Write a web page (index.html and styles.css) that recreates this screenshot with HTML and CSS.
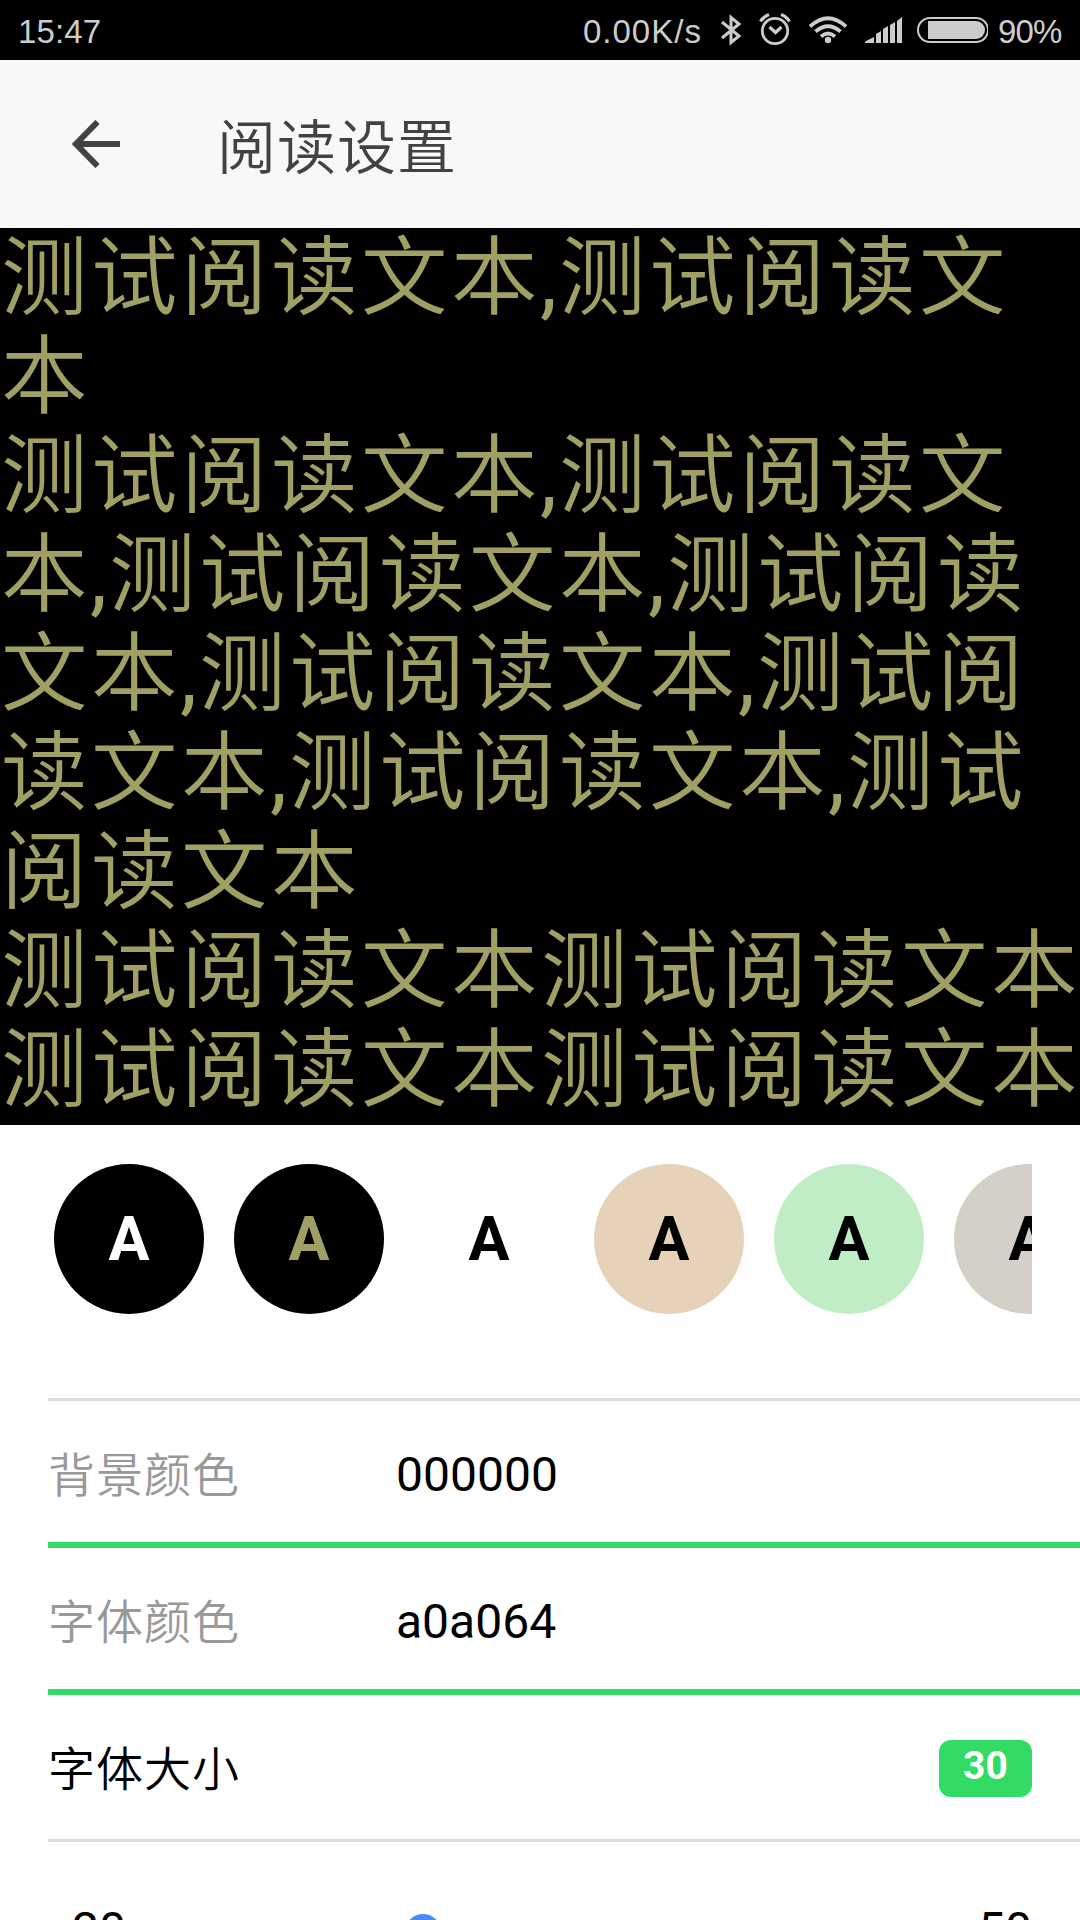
FILE: index.html
```
<!DOCTYPE html>
<html lang="zh-CN">
<head>
<meta charset="utf-8">
<title>阅读设置</title>
<link rel="stylesheet" href="styles.css">
</head>
<body>
<div class="status-bar">
  <span class="clock">15:47</span>
  <span class="speed">0.00K/s</span>
  <svg class="status-icons" width="272" height="60" viewBox="716 0 272 60" fill="none" stroke="#ccc">
    <path stroke-width="3" d="M722 22 739 36 731 42.500V17.500L739 24 722 38"/>
    <circle cx="775" cy="31" r="12.700" stroke-width="2.800"/>
    <path stroke-width="3.200" d="M769.500 27l6 5.500 6-5.500M760.500 21.500q3-5 8.500-7M789.500 21.500q-3-5-8.500-7"/>
    <path stroke-width="3.800" d="M810 26.500q18-16.500 36 0M815.500 31.500q12.500-10.500 25 0M821 36.500q7-6 14 0"/>
    <circle cx="828" cy="40" r="3.200" fill="#ccc" stroke="none"/>
    <path fill="#ccc" stroke="none" d="M865 43v-1.500l9-4.500V43zM876 43V34l5-3v12zM883 43V29l5-3v17zM890 43V25l5-3v21zM897 43V21l5-4v26z"/>
    <rect x="918" y="18" width="70" height="24" rx="12" stroke-width="2"/>
    <path fill="#ccc" stroke="none" d="M928 21h48a9 9 0 0 1 0 18h-48z"/>
  </svg>
  <span class="battery">90%</span>
</div>
<header class="toolbar">
  <svg class="back" width="48" height="48" viewBox="0 0 48 48" fill="none" stroke="#424242" stroke-width="6"><path d="M25.500 2 4 24l21.500 22M4 24h44"/></svg>
  <h1 class="title">阅读设置</h1>
</header>
<section class="preview">
  <p>测试阅读文本<span class="comma">,</span>测试阅读文<br>本</p>
  <p>测试阅读文本<span class="comma">,</span>测试阅读文<br>本<span class="comma">,</span>测试阅读文本<span class="comma">,</span>测试阅读<br>文本<span class="comma">,</span>测试阅读文本<span class="comma">,</span>测试阅<br>读文本<span class="comma">,</span>测试阅读文本<span class="comma">,</span>测试<br>阅读文本</p>
  <p>测试阅读文本测试阅读文本</p>
  <p>测试阅读文本测试阅读文本</p>
  <p>测试阅读文本测试阅读文本</p>
</section>
<section class="swatches">
  <div class="swatch night">A</div>
  <div class="swatch olive">A</div>
  <div class="swatch white">A</div>
  <div class="swatch sand">A</div>
  <div class="swatch mint">A</div>
  <div class="swatch stone">A</div>
</section>
<main class="settings">
  <div class="row field"><span class="label">背景颜色</span><span class="value">000000</span></div>
  <div class="row field"><span class="label">字体颜色</span><span class="value">a0a064</span></div>
  <div class="row"><span class="name">字体大小</span><span class="badge">30</span></div>
  <div class="range"><span>20</span><span class="track"><i class="knob"></i></span><span>50</span></div>
</main>
</body>
</html>
```
FILE: styles.css
```
* { box-sizing: border-box; margin: 0; padding: 0; }
body {
  width: 1080px; height: 1920px; overflow: hidden; background: #fff; color: #000;
  display: flex; flex-direction: column;
  font-family: Roboto, "Noto Sans CJK SC", sans-serif; font-size: 48px; font-weight: 400;
}
.status-bar {
  flex: none; height: 60px; background: #000; color: #ccc; display: flex; align-items: center;
  padding: 3px 18px 0; font-size: 33px; line-height: 57px;
  font-family: "Liberation Sans", sans-serif;
}
.clock { letter-spacing: 0.1px; }
.speed { margin-left: auto; width: 119px; margin-right: 14px; white-space: nowrap; letter-spacing: 1px; }
.status-icons { flex: none; margin-top: -3px; }
.battery { margin-left: 10px; width: 64px; white-space: nowrap; letter-spacing: -0.8px; }
.toolbar {
  flex: none; height: 168px; background: #f8f8f8; color: #424242;
  display: flex; align-items: center; padding: 0 72px;
}
.back { flex: none; }
.title {
  margin-left: 97px; font-size: 59px; letter-spacing: 1px; line-height: 90px;
  font-family: "Noto Sans CJK SC DemiLight", "Noto Sans CJK SC", sans-serif; font-weight: 350;
}
.preview {
  flex: none; height: 897px; padding: 1px 0 0 1px; overflow: hidden; background: #000; color: #a0a064;
  font-family: Roboto, "Noto Sans CJK SC DemiLight", "Noto Sans CJK SC", sans-serif; font-weight: 350;
  font-size: 86.5px; letter-spacing: 3.5px; line-height: 99px; white-space: nowrap;
}
.comma { font-weight: 400; letter-spacing: 2px; margin-left: -1px; }
.swatches {
  flex: none; height: 270px; margin: 0 48px; padding: 39px 6px 0;
  display: flex; gap: 30px; overflow: hidden;
}
.swatch {
  flex: none; width: 150px; height: 150px; border-radius: 50%;
  font-size: 61px; font-weight: 700; line-height: 151px; text-align: center;
}
.night { background: #000; color: #fff; }
.olive { background: #000; color: #a0a064; }
.white { background: #fff; }
.sand { background: #e6d2b9; }
.mint { background: #c1edc6; }
.stone { background: #d4d0c8; }
.settings {
  margin: 3px 0 0 48px; border-top: 3px solid #ddd; flex: none;
}
.row {
  height: 147px; display: flex; align-items: center; line-height: 60px;
  border-bottom: 6px solid #32db64;
}
.label, .name {
  font-size: 47px; letter-spacing: 1px;
  font-family: "Noto Sans CJK SC DemiLight", "Noto Sans CJK SC", sans-serif; font-weight: 350;
}
.name { margin-top: -2px; }
.value { padding-top: 6px; }
.row:nth-child(3) { border-bottom: 3px solid #ddd; justify-content: space-between; padding-right: 48px; }
.label { width: 348px; color: #999; }
.badge {
  width: 93px; height: 57px; margin-top: 2px; border-radius: 12px; background: #32db64; color: #fff;
  font-size: 39px; font-weight: 700; line-height: 53px; text-align: center;
}
.range { display: flex; align-items: center; height: 174px; padding: 0 48px 0 24px; }
.track { flex: 1; padding-left: 279px; }
.knob { display: block; width: 36px; height: 36px; margin-top: 6px; border-radius: 50%; background: #488aff; }
```
